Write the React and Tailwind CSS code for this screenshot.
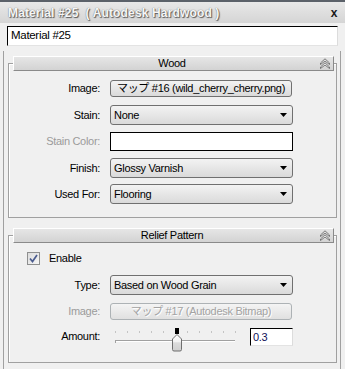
import React from 'react';

const FONT = "font-['Liberation_Sans','Noto_Sans_CJK_JP',sans-serif]";

function Chevrons() {
  return (
    <svg width="10" height="11" viewBox="0 0 10 11">
      <polygon points="0.5,5 5,0.8 9.5,5 9.5,6.5 5,3 0.5,6.5" fill="#efefef" stroke="#6a6a6a" strokeWidth="0.9" />
      <polygon points="0.5,9 5,4.8 9.5,9 9.5,10.5 5,7 0.5,10.5" fill="#efefef" stroke="#6a6a6a" strokeWidth="0.9" />
    </svg>
  );
}

function RolloutHeader({ title }) {
  return (
    <div className="relative z-10 ml-[9px] flex h-[15px] w-[321px] items-center border-t border-l border-t-white border-l-white border-b border-r border-b-[#8a8a8a] border-r-[#8a8a8a] bg-linear-to-b from-[#e6e6e6] to-[#d3d3d3] pr-[3px]">
      <div className="flex-1" />
      <span className="leading-none text-black">{title}</span>
      <div className="flex flex-1 justify-end">
        <Chevrons />
      </div>
    </div>
  );
}

function Label({ children, dim }) {
  return (
    <div className={`w-[92px] shrink-0 pr-[1px] text-right ${dim ? 'text-[#9b9b9b]' : 'text-black'}`}>
      {children}
    </div>
  );
}

function Select({ value }) {
  return (
    <div className="flex h-[20px] w-[183px] items-center justify-between rounded-[3px] border border-[#707070] bg-linear-to-b from-[#f3f3f3] to-[#dadada] pl-[3px] pr-[5px]">
      <span className="leading-none">{value}</span>
      <svg width="7" height="4" viewBox="0 0 7 4">
        <path d="M0 0h7L3.5 4z" fill="#000" />
      </svg>
    </div>
  );
}

function MapButton({ children, disabled }) {
  return (
    <div
      className={`flex h-[17px] w-[182px] items-center justify-center overflow-hidden whitespace-nowrap rounded-[3px] border bg-linear-to-b leading-none ${
        disabled
          ? 'border-[#adb2b5] from-[#f4f4f4] to-[#e0e0e0] text-[#a3a3a3] [text-shadow:1px_1px_0_#ffffff]'
          : 'border-[#707070] from-[#f3f3f3] to-[#dadada] text-black'
      }`}
    >
      {children}
    </div>
  );
}

function Row({ label, dim, className = '', children }) {
  return (
    <div className={`flex items-center gap-[9px] ${className}`}>
      <Label dim={dim}>{label}</Label>
      {children}
    </div>
  );
}

function Slider() {
  const ticks = [];
  for (let i = 0; i <= 10; i++) ticks.push(5 + i * 12);
  return (
    <svg width="130" height="24" viewBox="0 0 130 24">
      {ticks.map((x) => (
        <rect key={x} x={x} y="3" width="1" height="2" fill="#c4c4c4" />
      ))}
      <rect x="5" y="12" width="120" height="1" fill="#a0a0a0" />
      <rect x="5" y="13" width="120" height="1" fill="#ffffff" />
      <rect x="5" y="12" width="1" height="3" fill="#a0a0a0" />
      <rect x="65" y="0" width="4" height="6" fill="#000" />
      <defs>
        <linearGradient id="thumb" x1="0" y1="0" x2="0" y2="1">
          <stop offset="0" stopColor="#ffffff" />
          <stop offset="0.45" stopColor="#f2f2f2" />
          <stop offset="0.5" stopColor="#dcdcdc" />
          <stop offset="1" stopColor="#d0d0d0" />
        </linearGradient>
      </defs>
      <path d="M62.5 11 L67 6.5 L71.5 11 L71.5 21.5 Q71.5 23 70 23 L64 23 Q62.5 23 62.5 21.5 Z" fill="url(#thumb)" stroke="#6f6f6f" strokeWidth="1" />
    </svg>
  );
}

export default function App() {
  return (
    <div className={`${FONT} h-[369px] w-[345px] overflow-hidden bg-[#f0f0f0] text-[11px] tracking-[-0.3px] text-black`}>
      {/* title bar */}
      <div className="flex h-[23px] items-center justify-between border-t-2 border-[#5b6169] bg-linear-to-b from-[#e8e8e8] to-[#d5d5d5] pl-[8px] pr-[8px]">
        <span className="text-[12px] font-bold tracking-[0.15px] text-[#f6f6f6] [text-shadow:1px_1px_1px_#5a5a5a,0_0_1px_#5a5a5a]">
          Material #25&nbsp; ( Autodesk Hardwood )
        </span>
        <span className="text-[12px] font-bold text-[#1a1a1a]">x</span>
      </div>

      {/* name field */}
      <div className="ml-[7px] mt-[3px] flex h-[20px] w-[331px] items-center border-t border-l border-t-black border-l-black border-b border-r border-b-[#e3e3e3] border-r-[#dcdcdc] bg-white pl-[3px] text-[11.5px]">
        Material #25
      </div>

      {/* scroll panel */}
      <div className="ml-[3px] mt-[5px] h-[400px] w-[338px] border-l border-r border-[#a0a0a0]">
        {/* Wood */}
        <div className="pt-[5px]">
          <RolloutHeader title="Wood" />
          <div className="-mt-[8px] ml-[4px] w-[329px] border border-[#a0a0a0] pb-[13px] pt-[16px] shadow-[inset_1px_1px_0_#ffffff]">
            <Row label="Image:">
              <MapButton>マップ #16 (wild_cherry_cherry.png)</MapButton>
            </Row>
            <Row label="Stain:" className="mt-[8px]">
              <Select value="None" />
            </Row>
            <Row label="Stain Color:" dim className="mt-[7px]">
              <div className="h-[19px] w-[183px] border border-black bg-white" />
            </Row>
            <Row label="Finish:" className="mt-[7px]">
              <Select value="Glossy Varnish" />
            </Row>
            <Row label="Used For:" className="mt-[6px]">
              <Select value="Flooring" />
            </Row>
          </div>
        </div>

        {/* Relief Pattern */}
        <div className="pt-[10px]">
          <RolloutHeader title="Relief Pattern" />
          <div className="-mt-[8px] ml-[4px] w-[329px] border border-[#a0a0a0] pb-[10px] pt-[16px] shadow-[inset_1px_1px_0_#ffffff]">
            <div className="ml-[18px] flex items-center gap-[9px]">
              <div className="flex h-[13px] w-[13px] items-center justify-center border border-[#8e8f8f] bg-linear-to-br from-[#dcdcdc] to-[#f6f6f6]">
                <svg width="9" height="9" viewBox="0 0 9 9">
                  <path d="M1 4.5 L3.5 7.5 L8 1" fill="none" stroke="#4b5c8f" strokeWidth="1.7" />
                </svg>
              </div>
              <span className="leading-none">Enable</span>
            </div>
            <Row label="Type:" className="mt-[10px]">
              <Select value="Based on Wood Grain" />
            </Row>
            <Row label="Image:" dim className="mt-[8px]">
              <MapButton disabled>マップ #17 (Autodesk Bitmap)</MapButton>
            </Row>
            <div className="mt-[8px] flex items-start gap-[9px]">
              <div className="w-[92px] shrink-0 pr-[1px] text-right leading-[16px]">Amount:</div>
              <Slider />
              <div className="ml-[1px] flex h-[18px] w-[43px] items-center border-t border-l border-t-black border-l-black border-b border-r border-b-[#e3e3e3] border-r-[#dcdcdc] bg-white pl-[2px] text-[#10105a]">
                0.3
              </div>
            </div>
          </div>
        </div>
      </div>
    </div>
  );
}
